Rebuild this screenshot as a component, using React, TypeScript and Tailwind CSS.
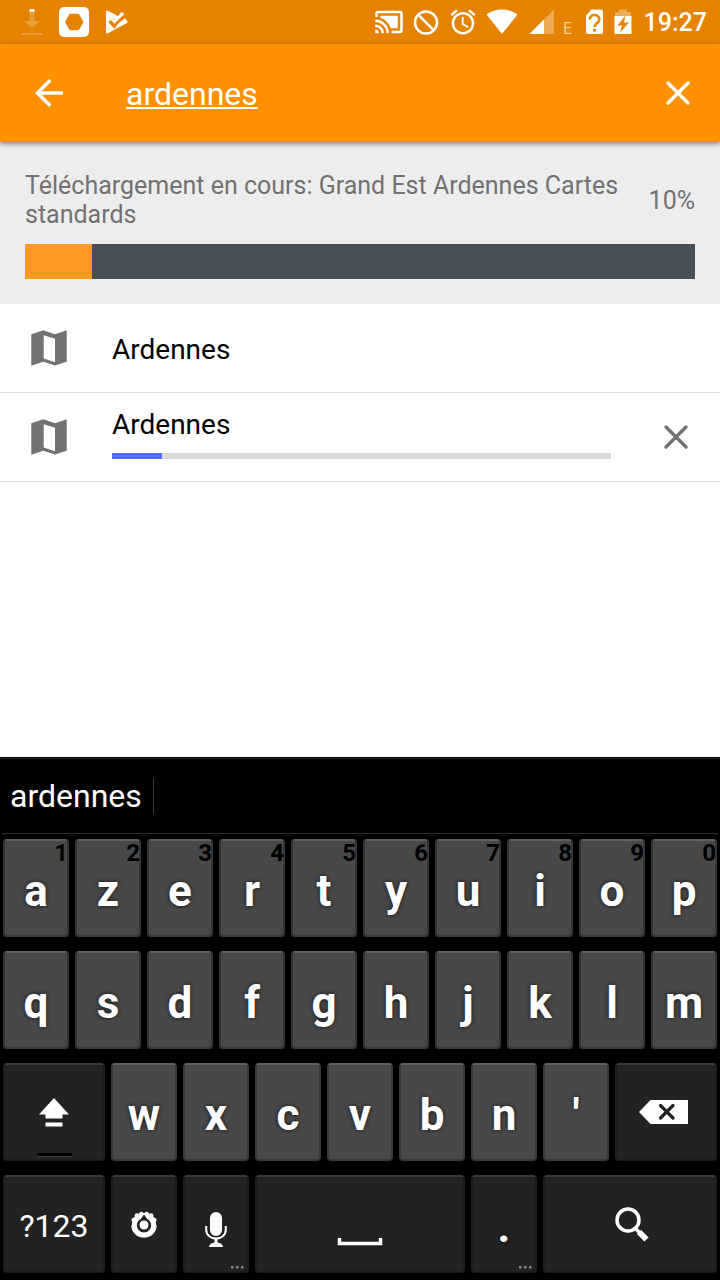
import React, { useState } from "react";

type KeyTone = "light" | "dark";

interface KeyProps {
  label: string;
  span?: string;
  tone?: KeyTone;
  hint?: string;
  more?: boolean;
  children?: React.ReactNode;
}

function Key({ label, span = "col-span-2", tone = "light", hint, more, children }: KeyProps) {
  const surface =
    tone === "light"
      ? "bg-[#484848] border-t-[#606060] border-x-[#383838] border-b-[#383838]"
      : "bg-[#222222] border-t-[#3a3a3a] border-x-[#1c1c1c] border-b-[#1c1c1c]";
  return (
    <button
      type="button"
      aria-label={label}
      className={`${span} ${surface} relative mx-[3px] flex h-[98px] items-center justify-center rounded-[4px] border-2 text-white`}
    >
      {hint && (
        <span className="absolute -top-0.5 -right-px text-[24px] leading-7 font-bold text-black">
          {hint}
        </span>
      )}
      {children ?? (
        <span className="pt-1.5 text-[44px] leading-none font-bold [text-shadow:0_0_4px_#111]">{label}</span>
      )}
      {more && (
        <svg className="absolute right-0.5 bottom-0.5" width="14" height="3" fill="#858585" aria-hidden="true">
          <rect x="0" width="2.500" height="2.500" />
          <rect x="5" width="2.500" height="2.500" />
          <rect x="10" width="2.500" height="2.500" />
        </svg>
      )}
    </button>
  );
}

function StatusBar() {
  return (
    <div className="flex h-11 items-center justify-between bg-[#e58200] pr-[13px] pl-[22px] text-white">
      <div className="flex items-center gap-[17px]">
        <svg width="20" height="28" viewBox="0 0 20 28" aria-hidden="true">
          <path d="M7.500 4h5v9H18l-8 7.500L2 13h5.500z" fill="#fff" fillOpacity=".22" />
          <rect x="0" y="25" width="20" height="2" fill="#fff" fillOpacity=".22" />
          <rect x="7.500" y="1" width="5" height="3" fill="#fff" />
        </svg>
        <svg width="30" height="30" viewBox="0 0 30 30" aria-hidden="true">
          <rect width="30" height="30" rx="5" fill="#fff" />
          <path d="M11.800 9h6.800l3.400 6-3.400 6h-6.800L8.500 15z" fill="#e58200" stroke="#e58200" strokeWidth="4.500" strokeLinejoin="round" />
        </svg>
        <svg width="22" height="24" viewBox="0 0 22 24" aria-hidden="true">
          <path d="M1 1.500 20.500 12 1 22.500z" fill="#fff" stroke="#fff" strokeWidth="2" strokeLinejoin="round" />
          <path d="M10 5 14 1h8v7.500l-3 1.500z" fill="#e58200" />
          <path d="m4.500 10 4 4.500L18.500 4.500" fill="none" stroke="#e58200" strokeWidth="6" />
          <path d="m3.500 8 5 5L17 3" fill="none" stroke="#fff" strokeWidth="3.600" />
          <path d="M4.500 10.500 8.500 15l9-9" fill="none" stroke="#e58200" strokeWidth="1.800" />
          <path d="m13.500 12.500 5.500-4.300 2.500 3.500-8 4.500-4 .500z" fill="#fff" />
        </svg>
      </div>
      <div className="flex items-center gap-2">
        <svg width="30" height="30" viewBox="0 0 24 24" fill="#fff" aria-hidden="true">
          <path d="M1 18v3h3c0-1.660-1.340-3-3-3zm0-4v2c2.760 0 5 2.240 5 5h2c0-3.870-3.130-7-7-7zm18-7H5v1.630c3.960 1.280 7.090 4.410 8.370 8.370H19V7zM1 10v2c4.970 0 9 4.030 9 9h2c0-6.080-4.930-11-11-11zm20-7H3c-1.100 0-2 .9-2 2v3h2V5h18v14h-7v2h7c1.100 0 2-.9 2-2V5c0-1.100-.9-2-2-2z" />
        </svg>
        <svg width="28" height="28" viewBox="0 0 28 28" fill="none" stroke="#fff" strokeWidth="2.500" aria-hidden="true">
          <circle cx="14" cy="14.500" r="11" />
          <path d="m6.200 6.700 15.600 15.600" />
        </svg>
        <svg width="30" height="30" viewBox="0 0 24 24" fill="#fff" aria-hidden="true">
          <path d="M22 5.720l-4.600-3.860-1.290 1.530 4.600 3.860L22 5.720zM7.880 3.390L6.600 1.860 2 5.710l1.290 1.530 4.590-3.850zM12.500 8H11v6l4.750 2.850.75-1.230-4-2.370V8zM12 4c-4.970 0-9 4.030-9 9s4.020 9 9 9c4.970 0 9-4.030 9-9s-4.030-9-9-9zm0 16c-3.870 0-7-3.130-7-7s3.130-7 7-7 7 3.130 7 7-3.130 7-7 7z" />
        </svg>
        <svg width="32" height="26" viewBox="0 0 32 26" fill="#fff" aria-hidden="true">
          <path d="M16 25 .5 5.500C4.500 2.500 9.500.5 16 .5s11.500 2 15.500 5z" />
        </svg>
        <svg width="28" height="26" viewBox="0 0 28 26" fill="#fff" aria-hidden="true">
          <path d="M28 .5V25H3.500z" fillOpacity=".32" />
          <path d="M18 10.500V25H3.500z" />
        </svg>
        <span className="w-3 pt-3.5 text-center text-[16px] leading-4 text-white/60">E</span>
        <svg width="24" height="26" viewBox="0 0 24 26" aria-hidden="true">
          <path d="M9.500.5H19a2 2 0 0 1 2 2V23a2 2 0 0 1-2 2H6a2 2 0 0 1-2-2V6.500z" fill="#fff" />
          <path d="M7.700 10.500c0-6 9.600-6 9.600 0 0 3.500-4.800 3.500-4.800 7.500" fill="none" stroke="#e58200" strokeWidth="2.600" />
          <rect x="11.100" y="19.800" width="2.800" height="2.800" fill="#e58200" />
        </svg>
        <svg width="18" height="26" viewBox="0 0 18 26" aria-hidden="true">
          <path d="M5 .5h8V3h4v4H1V3h4z" fill="#fff" fillOpacity=".35" />
          <path d="M.5 7h17v18H.5z" fill="#fff" />
          <path d="M11.500 6.500 3.500 16.500H8L6 23.500 15 13.500H10z" fill="#e58200" />
        </svg>
        <time className="pt-0.5 pl-1 text-[25px] leading-7 font-medium">19:27</time>
      </div>
    </div>
  );
}

function CloseIcon() {
  return (
    <svg width="30" height="30" viewBox="0 0 30 30" fill="none" stroke="currentColor" strokeWidth="3.400" strokeLinecap="round" aria-hidden="true">
      <path d="M5 5l20 20M25 5 5 25" />
    </svg>
  );
}

function MapIcon() {
  return (
    <svg width="48" height="48" viewBox="0 0 48 48" fill="#727272" aria-hidden="true" className="shrink-0">
      <path
        fillRule="evenodd"
        d="M6.300 10.300 18.300 6.300 30 10.300 41.700 6.300V37.700L30 41.500 18.300 37.700 6.300 41.700zM18.700 11.300V34.500L30 38.300V14.700z"
      />
    </svg>
  );
}

const topRow = ["a", "z", "e", "r", "t", "y", "u", "i", "o", "p"];
const homeRow = ["q", "s", "d", "f", "g", "h", "j", "k", "l", "m"];
const lowerRow = ["w", "x", "c", "v", "b", "n", "'"];

function Keyboard() {
  return (
    <section aria-label="Clavier" className="mt-auto border-t border-black bg-black text-white">
      <div className="flex h-[75px] items-center border-t border-[#242424]">
        <button type="button" className="h-9 border-r border-[#3c3c3c] pr-[11px] pl-2.5 text-[32px] leading-9">
          ardennes
        </button>
      </div>
      <div className="mx-0.5 border-t border-[#2e2e2e]" />
      <div className="grid grid-cols-20 gap-y-3.5 pt-[5px] pb-[7px]">
        {topRow.map((k, i) => (
          <Key key={k} label={k} hint={String((i + 1) % 10)} />
        ))}
        {homeRow.map((k) => (
          <Key key={k} label={k} />
        ))}
        <Key label="Majuscule" span="col-span-3" tone="dark">
          <svg width="30" height="30" viewBox="0 0 30 30" fill="#fff" className="mt-0.5" aria-hidden="true">
            <path d="M15 0 30 16.500H23.500V20.500H6.500V16.500H0zM6.500 24.500h17v4h-17z" />
          </svg>
          <span className="absolute bottom-0.5 h-1 w-[35px] border-b border-[#444] bg-black" />
        </Key>
        {lowerRow.map((k) => (
          <Key key={k} label={k} />
        ))}
        <Key label="Effacer" span="col-span-3" tone="dark">
          <svg width="50" height="24" viewBox="0 0 50 24" className="mr-1" aria-hidden="true">
            <path d="M0 12 11.500 0H49v24H11.500z" fill="#fff" />
            <path d="m21.500 5.500 12.500 12.500M34 5.500 21.500 18" stroke="#222" strokeWidth="3.200" strokeLinecap="round" />
          </svg>
        </Key>
        <Key label="?123" span="col-span-3" tone="dark">
          <span className="pt-1 text-[32px] leading-none">?123</span>
        </Key>
        <Key label="Paramètres" tone="dark">
          <svg width="28" height="28" viewBox="0 0 28 28" className="mt-0.5" aria-hidden="true">
            <g fill="#fff">
              <circle cx="14" cy="14" r="12" />
              <circle cx="4" cy="9" r="2.500" />
              <circle cx="7" cy="4.800" r="2.500" />
              <circle cx="11.300" cy="3" r="2.300" />
              <circle cx="16.700" cy="3" r="2.300" />
              <circle cx="21" cy="4.800" r="2.500" />
              <circle cx="24" cy="9" r="2.500" />
              <circle cx="14" cy="14" r="12.800" clipPath="inset(50% 0 0 0)" />
            </g>
            <path d="M14 3.500 17 7.700a7.200 7.200 0 1 1-6 0z" fill="#222" />
            <circle cx="14" cy="14" r="4.500" fill="#fff" />
          </svg>
        </Key>
        <Key label="Saisie vocale" tone="dark" more>
          <svg width="22" height="36" viewBox="0 0 22 36" className="mt-3" aria-hidden="true">
            <rect x="5" y="0" width="12" height="24" rx="6" fill="#fff" />
            <path d="M1.200 14v3.500c0 5.500 4 9 9.800 9s9.800-3.500 9.800-9V14" fill="none" stroke="#fff" strokeWidth="2" />
            <path d="M9.500 26h3v4.500c3 .5 5.500 2 5.500 4.500H4c0-2.500 2.500-4 5.500-4.500z" fill="#fff" />
          </svg>
        </Key>
        <Key label="Espace" span="col-span-6" tone="dark">
          <svg width="46" height="8" viewBox="0 0 46 8" className="mt-9" aria-hidden="true">
            <path d="M2.500 0v5.500h41V0" fill="none" stroke="#fff" strokeWidth="3.500" />
          </svg>
        </Key>
        <Key label="." tone="dark" more />
        <Key label="Rechercher" span="col-span-5" tone="dark">
          <svg width="36" height="36" viewBox="0 0 36 36" fill="none" stroke="#fff" className="ml-1" aria-hidden="true">
            <circle cx="14" cy="14" r="11" strokeWidth="3.500" />
            <path d="m21.500 22.500 4 4" strokeWidth="3.500" />
            <path d="m25 26 7.500 7.500" strokeWidth="6" />
          </svg>
        </Key>
      </div>
    </section>
  );
}

export default function App() {
  const [query, setQuery] = useState("ardennes");
  const progress = 10;

  return (
    <div className="flex min-h-screen flex-col bg-white font-[Roboto,sans-serif]">
      <StatusBar />
      <header className="relative flex h-[98px] items-center bg-[#ff9000] pr-[27px] pl-7 text-white shadow-[0_2px_5px_rgba(0,0,0,0.45)]">
        <button type="button" aria-label="Retour">
          <svg width="42" height="42" viewBox="0 0 24 24" fill="#fff" aria-hidden="true">
            <path d="M20 11H7.830l5.590-5.590L12 4l-8 8 8 8 1.410-1.410L7.830 13H20v-2z" />
          </svg>
        </button>
        <input
          type="text"
          aria-label="Rechercher une carte"
          value={query}
          onChange={(e) => setQuery(e.target.value)}
          spellCheck={false}
          className="ml-14 min-w-0 flex-1 bg-transparent pt-0.5 text-[32px] leading-10 underline decoration-2 underline-offset-2 outline-none"
        />
        <button type="button" aria-label="Vider la recherche">
          <CloseIcon />
        </button>
      </header>

      <section className="bg-[#ededed] px-[25px] pt-[29px] pb-[25px] text-[25px] leading-[29px] text-[#727272]">
        <div className="flex items-center justify-between gap-6">
          <p>Téléchargement en cours: Grand Est Ardennes Cartes standards</p>
          <span>{progress}%</span>
        </div>
        <div
          role="progressbar"
          aria-label="Téléchargement"
          aria-valuenow={progress}
          className="mt-[15px] h-[35px] bg-[#455156]"
        >
          <div className="h-full bg-[#ff9922]" style={{ width: `${progress}%` }} />
        </div>
      </section>

      <ul className="text-[28px] leading-[33px] text-black">
        <li className="flex h-[89px] items-center gap-[39px] border-b border-[#dedede] pr-5 pl-[25px]">
          <MapIcon />
          <span className="pt-0.5">Ardennes</span>
        </li>
        <li className="flex h-[89px] items-center border-b border-[#dedede] pr-5 pl-[25px]">
          <MapIcon />
          <div className="mr-[41px] ml-[39px] flex-1 pb-[7px]">
            <span className="block">Ardennes</span>
            <div
              role="progressbar"
              aria-label="Ardennes"
              aria-valuenow={progress}
              className="mt-3 h-1.5 bg-[#d9d9d9]"
            >
              <div className="h-full bg-[#536dfe]" style={{ width: `${progress}%` }} />
            </div>
          </div>
          <button
            type="button"
            aria-label="Annuler le téléchargement"
            className="flex size-12 items-center justify-center text-[#727272]"
          >
            <CloseIcon />
          </button>
        </li>
      </ul>

      <Keyboard />
    </div>
  );
}
